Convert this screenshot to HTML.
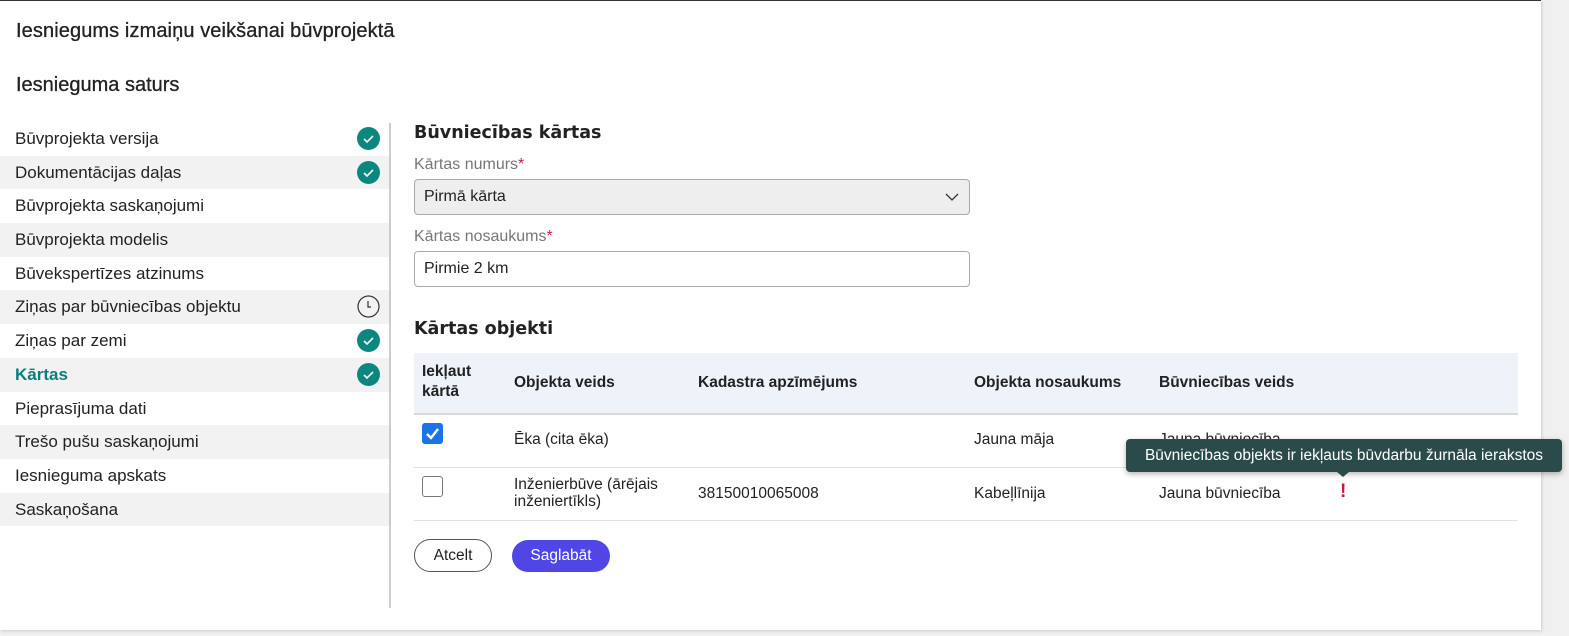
<!DOCTYPE html>
<html><head><meta charset="utf-8"><style>
*{box-sizing:border-box;margin:0;padding:0}
body{width:1569px;height:636px;background:#f0f0f0;font-family:"Liberation Sans",Arial,sans-serif;color:#222;position:relative;overflow:hidden}
.card{position:absolute;left:0;top:0;width:1541px;height:630px;background:#fff;border-top:1px solid #333;box-shadow:1px 1px 3px rgba(0,0,0,.15)}
.abs{position:absolute}
h1{position:absolute;left:16px;top:19px;font-size:20px;font-weight:normal;color:#222;letter-spacing:.1px;-webkit-text-stroke:.3px #222}
h2{position:absolute;left:16px;top:73px;font-size:20px;font-weight:normal;color:#222;-webkit-text-stroke:.3px #222}
.side{position:absolute;left:0;top:121px;width:390px}
.side div{height:33.7px;line-height:33.7px;padding-left:15px;font-size:17px;color:#222;position:relative}
.side div:nth-child(even){background:#f2f2f2}
.side .act{color:#0b7f7d;font-weight:bold}
.ok{position:absolute;right:10px;top:5px;width:23px;height:23px;border-radius:50%;background:#0b877f}
.ok svg,.clk svg{position:absolute;left:0;top:0}
.clk{position:absolute;right:10px;top:5px;width:23px;height:23px}
.vline{position:absolute;left:389px;top:122px;width:2px;height:485px;background:#ccc}
.t3{color:#222;font-weight:bold;font-family:"DejaVu Sans","Liberation Sans",sans-serif;font-size:17.5px}
.lbl{font-size:16px;color:#777}
.lbl b{color:#c0254a;font-weight:normal}
.inp{position:absolute;left:414px;width:556px;height:36px;border:1px solid #aaa;border-radius:4px;font-size:16px;padding-left:9px;line-height:34px;color:#222}
.thead{position:absolute;left:414px;top:352px;width:1104px;height:62px;background:#eef3fa;border-bottom:2px solid #d8d8d8}
.row{position:absolute;left:414px;width:1104px;border-bottom:1px solid #e2e2e2}
.hd{position:absolute;font-weight:bold;font-size:15.5px;color:#222}
.c{position:absolute;font-size:15.5px;color:#222}
.cb{position:absolute;left:422px;width:21px;height:21px;border-radius:3px}
</style></head><body>
<div class="card">
<h1>Iesniegums izmaiņu veikšanai būvprojektā</h1>
<h2>Iesnieguma saturs</h2>
<div class="side">
<div>Būvprojekta versija<span class="ok"><svg width="23" height="23"><path d="M7 12 l3 3 l6 -6" stroke="#fff" stroke-width="1.6" fill="none"/></svg></span></div>
<div>Dokumentācijas daļas<span class="ok"><svg width="23" height="23"><path d="M7 12 l3 3 l6 -6" stroke="#fff" stroke-width="1.6" fill="none"/></svg></span></div>
<div>Būvprojekta saskaņojumi</div>
<div>Būvprojekta modelis</div>
<div>Būvekspertīzes atzinums</div>
<div>Ziņas par būvniecības objektu<span class="clk"><svg width="23" height="23"><circle cx="11.5" cy="11.5" r="10.5" stroke="#333" stroke-width="1.2" fill="none"/><path d="M11 6 v6 h3" stroke="#333" stroke-width="1.2" fill="none"/></svg></span></div>
<div>Ziņas par zemi<span class="ok"><svg width="23" height="23"><path d="M7 12 l3 3 l6 -6" stroke="#fff" stroke-width="1.6" fill="none"/></svg></span></div>
<div class="act">Kārtas<span class="ok"><svg width="23" height="23"><path d="M7 12 l3 3 l6 -6" stroke="#fff" stroke-width="1.6" fill="none"/></svg></span></div>
<div>Pieprasījuma dati</div>
<div>Trešo pušu saskaņojumi</div>
<div>Iesnieguma apskats</div>
<div>Saskaņošana</div>
</div>
<div class="vline"></div>

<div class="abs t3" style="left:414px;top:122px">Būvniecības kārtas</div>
<div class="abs lbl" style="left:414px;top:155px">Kārtas numurs<b>*</b></div>
<div class="inp" style="top:178px;background:#eee">Pirmā kārta<svg class="abs" style="right:10px;top:13px" width="14" height="9"><path d="M1 1 l6 6 l6 -6" stroke="#333" stroke-width="1.3" fill="none"/></svg></div>
<div class="abs lbl" style="left:414px;top:227px">Kārtas nosaukums<b>*</b></div>
<div class="inp" style="top:250px;background:#fff">Pirmie 2 km</div>
<div class="abs t3" style="left:414px;top:318px">Kārtas objekti</div>

<div class="thead"></div>
<div class="hd" style="left:422px;top:361px;line-height:20px">Iekļaut<br>kārtā</div>
<div class="hd" style="left:514px;top:373px">Objekta veids</div>
<div class="hd" style="left:698px;top:373px">Kadastra apzīmējums</div>
<div class="hd" style="left:974px;top:373px">Objekta nosaukums</div>
<div class="hd" style="left:1159px;top:373px">Būvniecības veids</div>

<div class="row" style="top:413px;height:54px"></div>
<div class="cb" style="top:422px;background:#1a73e8"><svg width="21" height="21"><path d="M5 11 l4 4 l7 -9" stroke="#fff" stroke-width="2.4" fill="none"/></svg></div>
<div class="c" style="left:514px;top:430px">Ēka (cita ēka)</div>
<div class="c" style="left:974px;top:430px">Jauna māja</div>
<div class="c" style="left:1159px;top:430px">Jauna būvniecība</div>

<div class="row" style="top:467px;height:53px"></div>
<div class="cb" style="top:475px;border:1px solid #777;background:#fff"></div>
<div class="c" style="left:514px;top:475px;line-height:17px">Inženierbūve (ārējais<br>inženiertīkls)</div>
<div class="c" style="left:698px;top:484px">38150010065008</div>
<div class="c" style="left:974px;top:484px">Kabeļlīnija</div>
<div class="c" style="left:1159px;top:484px">Jauna būvniecība</div>
<div class="abs" style="left:1340px;top:480px;color:#d0163c;font-size:19px;font-weight:bold">!</div>

<div class="abs" style="left:1126px;top:438px;width:436px;height:33px;background:#2b4b4b;border-radius:4px;color:#fff;font-size:15.5px;line-height:33px;text-align:center;box-shadow:0 2px 6px rgba(0,0,0,.3)">Būvniecības objekts ir iekļauts būvdarbu žurnāla ierakstos</div>
<div class="abs" style="left:1337px;top:471px;width:0;height:0;border-left:6px solid transparent;border-right:6px solid transparent;border-top:5px solid #2b4b4b"></div>

<div class="abs" style="left:414px;top:538px;width:78px;height:33px;border:1px solid #555;border-radius:17px;text-align:center;line-height:31px;font-size:15.5px">Atcelt</div>
<div class="abs" style="left:512px;top:539px;width:98px;height:32px;background:#4f46e5;border-radius:16px;text-align:center;line-height:32px;font-size:15.5px;color:#fff">Saglabāt</div>
</div>
</body></html>
